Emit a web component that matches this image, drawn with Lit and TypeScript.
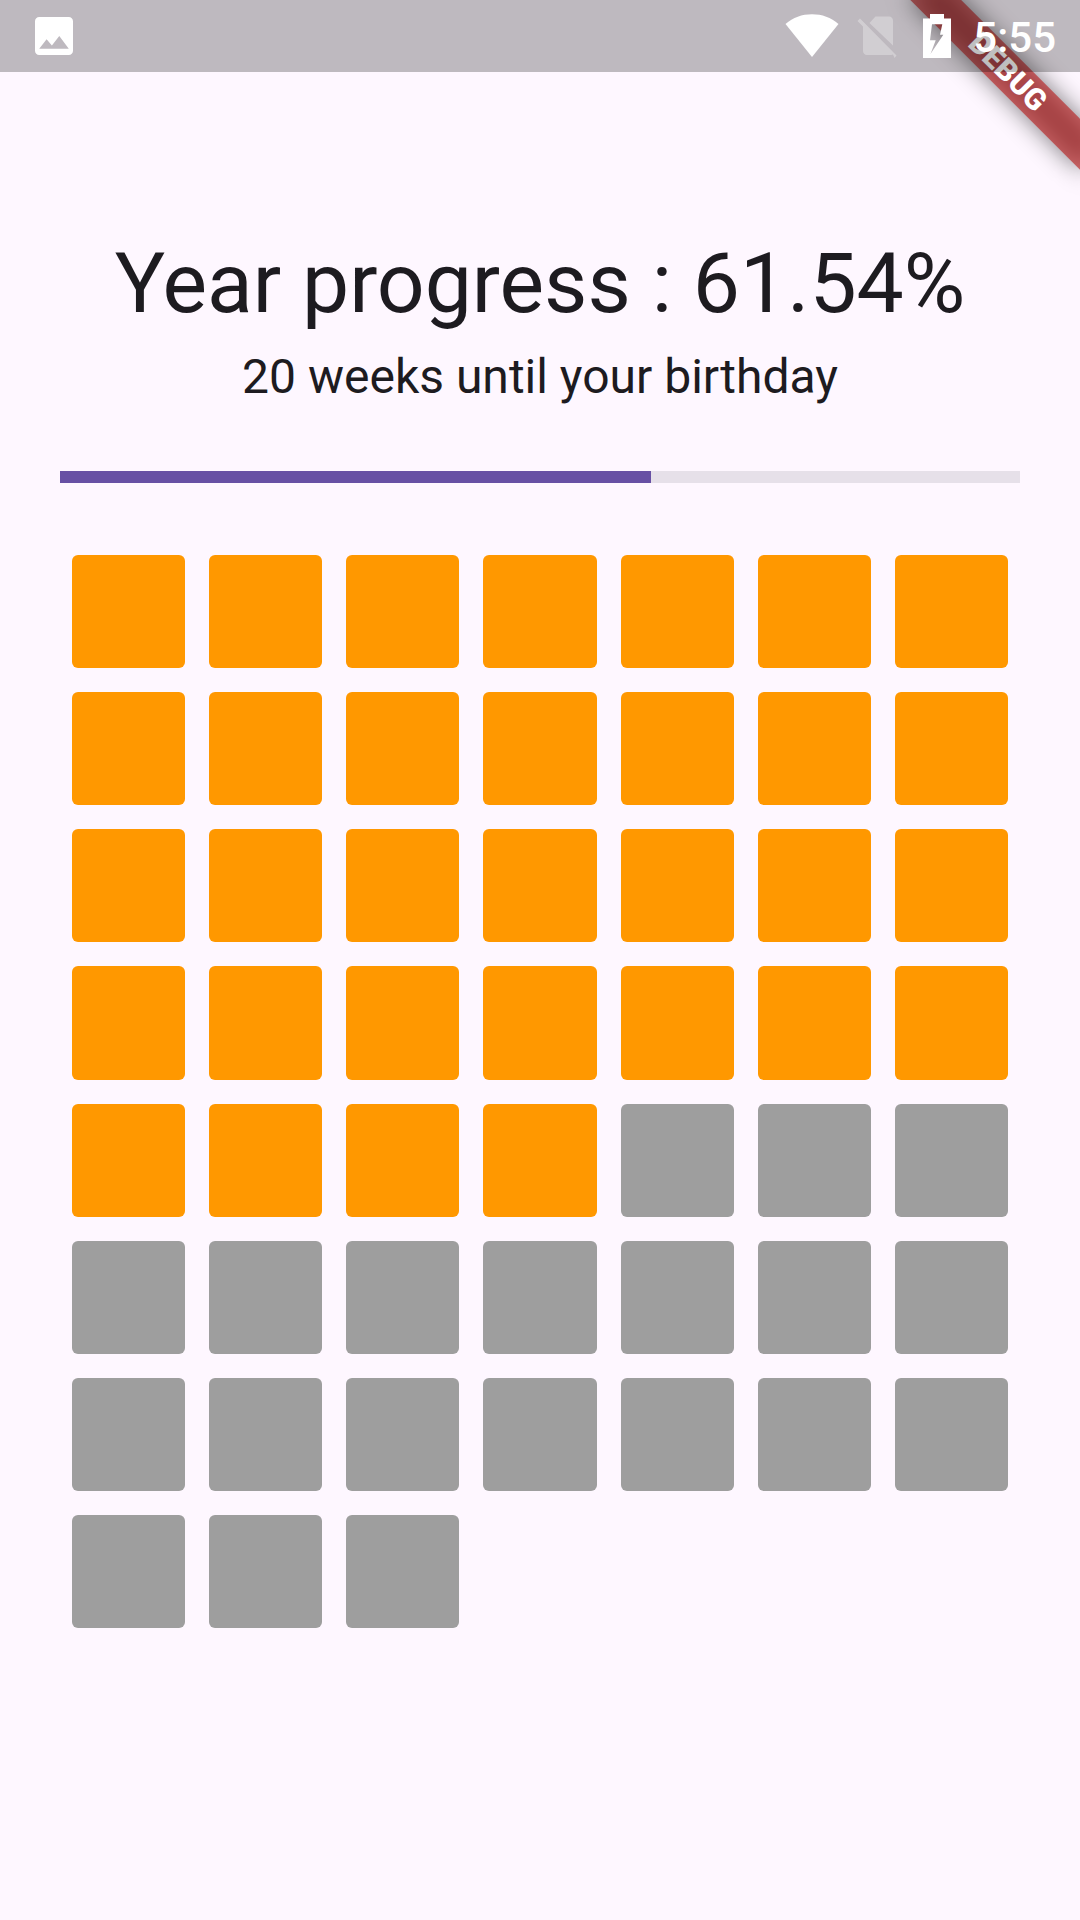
import { LitElement, html, css } from "lit";
import { customElement, property } from "lit/decorators.js";
import { classMap } from "lit/directives/class-map.js";

@customElement("status-bar")
class StatusBar extends LitElement {
  static styles = css`
    :host {
      display: flex;
      align-items: center;
      justify-content: space-between;
      position: relative;
      z-index: 2;
      height: 72px;
      padding: 0 24px 0 35px;
      box-sizing: border-box;
      background: rgba(0, 0, 0, 0.25);
      color: #fff;
    }
    svg {
      display: block;
      fill: currentColor;
    }
    .group {
      display: flex;
      align-items: center;
    }
    .picture {
      width: 38px;
      height: 38px;
    }
    .wifi {
      width: 54px;
      height: 44px;
      margin-right: 18px;
    }
    .sim {
      width: 40px;
      height: 44px;
      margin-right: 26px;
      opacity: 0.3;
    }
    .battery {
      width: 28px;
      height: 44px;
      margin-right: 22px;
    }
    .clock {
      padding-top: 4px;
      font: 500 42px/48px Roboto, sans-serif;
    }
  `;

  render() {
    return html`
      <svg class="picture" viewBox="3 3 18 18" role="img" aria-label="Picture saved">
        <path d="M21 19V5c0-1.1-.9-2-2-2H5c-1.1 0-2 .9-2 2v14c0 1.1.9 2 2 2h14c1.1 0 2-.9 2-2zM8.5 13.5l2.5 3.01L14.5 12l4.5 6H5l3.5-4.5z" />
      </svg>
      <div class="group">
        <svg class="wifi" viewBox="0 0 54 44" role="img" aria-label="Wi-Fi">
          <path d="M27 43 .5 10C8 3.500 17 .3 27 .3s19 3.200 26.500 9.700z" />
        </svg>
        <svg class="sim" viewBox="0 0 40 44" role="img" aria-label="No SIM card">
          <path d="M36 31.5V6.500c0-2.200-1.800-4-4-4H18.500L12.500 9z" />
          <path d="M3 4.500 .500 7 6 12.500V37c0 2.200 1.800 4 4 4h24c.700 0 1.400-.200 2-.500L37.500 44l2-2.500z" />
        </svg>
        <svg class="battery" viewBox="0 0 28 44" role="img" aria-label="Battery charging">
          <path fill-rule="evenodd" d="M7 0h14v4.500h7V44H0V4.500h7zM9 10.300h10.300L17 20.700h3.300L7.500 40l5.200-13.700H7z" />
        </svg>
        <time class="clock">5:55</time>
      </div>
    `;
  }
}

@customElement("debug-banner")
class DebugBanner extends LitElement {
  static styles = css`
    :host {
      display: block;
      position: absolute;
      top: 0;
      right: 0;
      z-index: 1;
      width: 260px;
      height: 260px;
      overflow: hidden;
      pointer-events: none;
    }
    .pivot {
      position: absolute;
      top: 0;
      right: 0;
      transform: rotate(45deg);
    }
    .shadow,
    .ribbon {
      position: absolute;
      top: 84px;
      left: -120px;
      width: 240px;
      height: 36px;
    }
    .shadow {
      background: rgba(0, 0, 0, 0.5);
      filter: blur(12px);
    }
    .ribbon {
      background: rgba(183, 28, 28, 0.63);
      color: #fff;
      font: 900 30px/36px Roboto, sans-serif;
      text-align: center;
    }
  `;

  render() {
    return html`
      <div class="pivot">
        <div class="shadow"></div>
        <div class="ribbon">DEBUG</div>
      </div>
    `;
  }
}

@customElement("week-grid")
class WeekGrid extends LitElement {
  @property({ type: Number }) total = 52;
  @property({ type: Number }) elapsed = 0;

  static styles = css`
    :host {
      display: block;
    }
    .grid {
      display: grid;
      grid-template-columns: repeat(7, 1fr);
      gap: 24px;
      margin: 0;
      padding: 0;
      list-style: none;
    }
    .week {
      aspect-ratio: 1;
      border-radius: 6px;
      background: #9e9e9e;
    }
    .elapsed {
      background: #ff9800;
    }
  `;

  render() {
    return html`
      <ul class="grid">
        ${Array.from(
          { length: this.total },
          (_, i) => html`<li class=${classMap({ week: true, elapsed: i < this.elapsed })}></li>`
        )}
      </ul>
    `;
  }
}

@customElement("app-root")
class AppRoot extends LitElement {
  private total = 52;
  private elapsed = 32;

  static styles = css`
    :host {
      display: block;
      position: relative;
      min-height: 100vh;
      overflow: hidden;
      background: #fef7ff;
      color: #1d1b20;
      font-family: Roboto, sans-serif;
    }
    .page {
      display: flex;
      flex-direction: column;
      padding: 162px 60px 72px;
    }
    .title,
    .subtitle {
      margin: 0;
      text-align: center;
      font-weight: 400;
    }
    .title {
      font-size: 84px;
      line-height: 100px;
    }
    .subtitle {
      margin-top: 7px;
      font-size: 48px;
      line-height: 72px;
    }
    .track {
      height: 12px;
      margin-top: 58px;
      background: #e6e0e9;
    }
    .bar {
      height: 100%;
      background: #6750a4;
    }
    .weeks {
      margin: 72px 12px 0;
    }
  `;

  render() {
    const percent = ((this.elapsed / this.total) * 100).toFixed(2);
    return html`
      <status-bar></status-bar>
      <debug-banner></debug-banner>
      <main class="page">
        <h1 class="title">Year progress : ${percent}%</h1>
        <p class="subtitle">${this.total - this.elapsed} weeks until your birthday</p>
        <div
          class="track"
          role="progressbar"
          aria-label="Year progress"
          aria-valuemin="0"
          aria-valuemax="100"
          aria-valuenow=${percent}
        >
          <div class="bar" style="width: ${percent}%"></div>
        </div>
        <week-grid class="weeks" .total=${this.total} .elapsed=${this.elapsed}></week-grid>
      </main>
    `;
  }
}
